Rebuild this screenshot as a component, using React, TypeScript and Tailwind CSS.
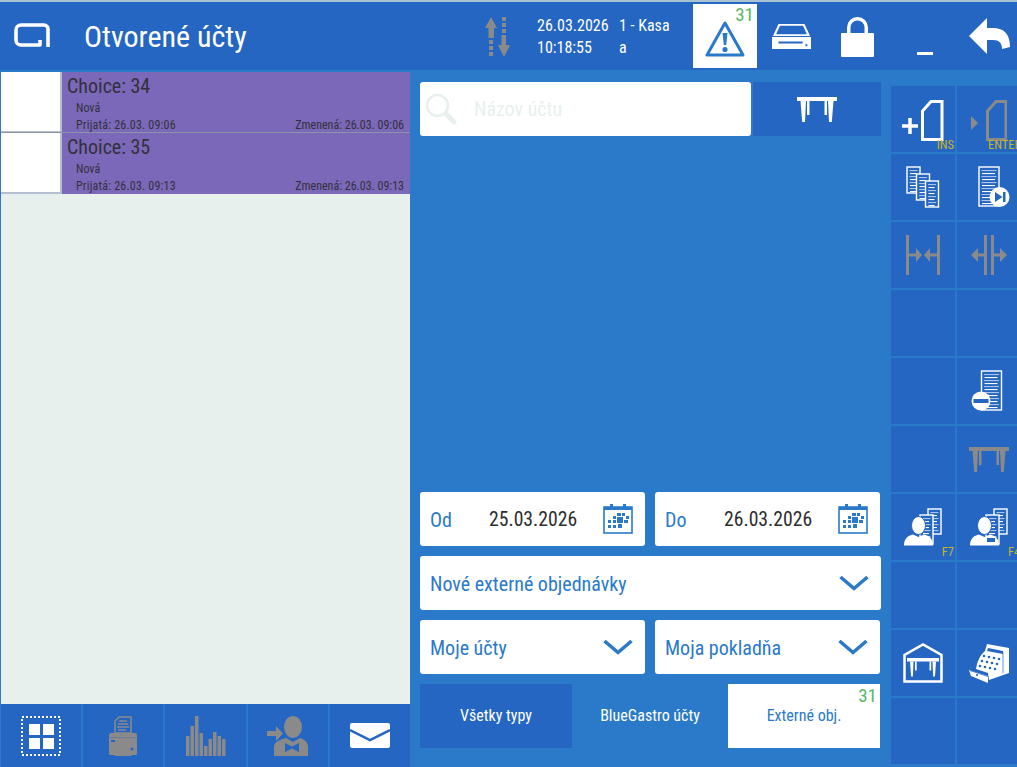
type SheetProps = { x: number; y: number; w: number; h: number };

const GRAY = "#8a8a8a";
const BLUE = "#2a7ac9";
const DARK = "#2566c2";

function Logo() {
  return (
    <svg width="36" height="26" viewBox="0 0 36 26" fill="none" stroke="#fff" strokeWidth="3.6">
      <path d="M34 24V6a4 4 0 0 0-4-4H7a5 5 0 0 0-5 5v10a5 5 0 0 0 5 5h19v-5" strokeLinejoin="round" />
    </svg>
  );
}

function SortIcon() {
  return (
    <svg width="25" height="40" viewBox="0 0 25 40" fill={GRAY} className="mt-[2px]">
      <path d="M0 11 6 0l6 11H9v10H3.500V11Z" />
      <path d="M4 23h4v4H4zM4 29h4v4H4zM4 35h4v4H4z" />
      <path d="M17 0h4v4h-4zM17 6h4v4h-4zM17 12h4v4h-4z" />
      <path d="M16.500 18H21v10h4l-6 12-6-12h3.500Z" />
    </svg>
  );
}

function AlertIcon() {
  return (
    <svg width="40" height="38" viewBox="0 0 40 38" fill="none">
      <path d="M20 3 2 35h36Z" stroke={BLUE} strokeWidth="3" strokeLinejoin="round" />
      <path d="M17.500 13h5l-1.300 12h-2.400Z" fill={BLUE} />
      <circle cx="20" cy="29.500" r="2.600" fill={BLUE} />
    </svg>
  );
}

function DrawerIcon() {
  return (
    <svg width="41" height="26" viewBox="0 0 42 28" fill="#fff">
      <path d="M7 1h28l6 13H1Zm1.600 2L4.400 12h33.200L33.400 3Z" fillRule="evenodd" />
      <path d="M0 15h42v13H0Zm7 5v2h26v-2Zm29 3v2h2v-2Z" fillRule="evenodd" />
    </svg>
  );
}

function LockIcon() {
  return (
    <svg width="33" height="40" viewBox="0 0 33 40" fill="#fff" className="-ml-px mt-[2px]">
      <path d="M6 17V10.500a10.500 10.500 0 0 1 21 0V17h-3.500v-6.500a7 7 0 0 0-14 0V17Z" />
      <rect x="0" y="16" width="33" height="24" rx="1" />
    </svg>
  );
}

function BackIcon() {
  return (
    <svg width="42" height="36" viewBox="0 0 42 36" fill="#fff">
      <path d="M0 18 18 0v10h6c11 0 17 6 17 19l-8 2c0-6-3-9-9-9h-6v14Z" />
    </svg>
  );
}

function SearchIcon() {
  return (
    <svg width="32" height="32" viewBox="0 0 32 32" fill="none" stroke="#e8f0ed">
      <circle cx="12.500" cy="12.500" r="10.500" strokeWidth="2.500" />
      <path d="M20 20l2 2" strokeWidth="2.500" />
      <path d="M22 22l7 7" strokeWidth="5" strokeLinecap="round" />
    </svg>
  );
}

function TableIcon({ color = "#fff" }: { color?: string }) {
  return (
    <svg width="40" height="25" viewBox="0 0 40 25" fill={color}>
      <rect x="0" y="0" width="40" height="4" />
      <path d="M3.500 4H9l-1 21H5.200Z" />
      <path d="M31 4h5.500l-1.700 21H32Z" />
      <rect x="10" y="4" width="2.500" height="14" />
      <rect x="27.500" y="4" width="2.500" height="14" />
    </svg>
  );
}

function AddDocIcon() {
  return (
    <svg width="42" height="42" viewBox="0 0 42 42" fill="none" stroke="#fff" className="mt-[3px]">
      <path d="M0 26h16M8 18v16" strokeWidth="3.500" />
      <path d="M20.500 39.500V11L29 1.500h11v38Z" strokeWidth="3" />
    </svg>
  );
}

function OpenDocIcon() {
  return (
    <svg width="36" height="42" viewBox="0 0 36 42" fill="none" className="mt-[3px]">
      <path d="M0 16 7 23 0 30Z" fill={GRAY} />
      <path d="M16.500 39.500V11L25 1.500h10v38Z" stroke={GRAY} strokeWidth="3" />
    </svg>
  );
}

function Sheet({ x, y, w, h }: SheetProps) {
  const lines = [];
  let odd = false;
  for (let ly = y + 3; ly < y + h - 1.500; ly += 3) {
    lines.push(
      <rect
        key={ly}
        x={odd ? x + 3 : x + 2.500}
        y={ly}
        width={odd ? w - 7 : w - 5}
        height="1.100"
        fill={odd ? "#ffffff" : "#a9c5ec"}
      />
    );
    odd = !odd;
  }
  return (
    <g>
      <rect x={x} y={y} width={w} height={h} fill={DARK} stroke="#fff" strokeWidth="1.400" />
      {lines}
    </g>
  );
}

function CopiesIcon() {
  return (
    <svg width="34" height="42" viewBox="0 0 34 42">
      <Sheet x={1} y={1} w={13} h={26} />
      <Sheet x={10.500} y={8} w={13} h={26} />
      <Sheet x={19.500} y={15} w={13} h={26} />
    </svg>
  );
}

function ReceiptPlayIcon() {
  return (
    <svg width="32" height="42" viewBox="0 0 32 42" className="ml-[9px]">
      <Sheet x={1} y={1} w={20} h={39} />
      <circle cx="21.500" cy="31" r="10" fill="#fff" />
      <path d="M17 26l7.500 5-7.500 5Z" fill={DARK} />
      <rect x="25" y="26" width="2.500" height="10" fill={DARK} />
    </svg>
  );
}

function ReceiptMinusIcon() {
  return (
    <svg width="32" height="42" viewBox="0 0 32 42" className="mr-[4px]">
      <Sheet x={10.500} y={1} w={20} h={39} />
      <circle cx="10" cy="31" r="9.500" fill="#fff" />
      <rect x="2.500" y="29" width="15" height="4" fill={DARK} />
    </svg>
  );
}

function MergeIcon() {
  return (
    <svg width="34" height="40" viewBox="0 0 34 40" fill={GRAY}>
      <rect x="0" y="0" width="3" height="40" />
      <rect x="31" y="0" width="3" height="40" />
      <path d="M3 18.500h7V13l6 7-6 7v-5.500H3Z" />
      <path d="M31 18.500h-7V13l-6 7 6 7v-5.500h7Z" />
    </svg>
  );
}

function SplitIcon() {
  return (
    <svg width="36" height="40" viewBox="0 0 36 40" fill={GRAY}>
      <rect x="13" y="0" width="3" height="40" />
      <rect x="20" y="0" width="3" height="40" />
      <path d="M13 18.500H7V13l-7 7 7 7v-5.500h6Z" />
      <path d="M23 18.500h6V13l7 7-7 7v-5.500h-6Z" />
    </svg>
  );
}

function UserDocsIcon({ badge }: { badge?: boolean }) {
  return (
    <svg width="38" height="38" viewBox="0 0 38 38">
      <Sheet x={24} y={1} w={13} h={25} />
      <Sheet x={16} y={7} w={13} h={29} />
      <ellipse cx="14.500" cy="17.500" rx="7" ry="9" fill="#fff" stroke={DARK} strokeWidth="1" />
      <path d="M0 37.500c0-7 4-10 9-11l5.500 2.500 5.500-2.500c5 1 9 4 9 11Z" fill="#fff" />
      {badge && <rect x="17" y="30" width="8" height="4" fill={DARK} />}
    </svg>
  );
}

function WarehouseIcon() {
  return (
    <svg width="40" height="40" viewBox="0 0 40 40" fill="none">
      <path d="M1.500 38.500V12L20 1.500 38.500 12v26.500Z" stroke="#fff" strokeWidth="2.500" />
      <rect x="4" y="15" width="32" height="3.500" fill="#fff" />
      <path d="M7 18.500h3.500l-.6 15H8.100ZM29.500 18.500H33l-1 15h-1.800Z" fill="#fff" />
      <rect x="12" y="18.500" width="1.700" height="9" fill="#fff" />
      <rect x="26.500" y="18.500" width="1.700" height="9" fill="#fff" />
    </svg>
  );
}

function CashRegisterIcon() {
  const keys = [
    [15, 12], [20, 13], [25, 14], [30, 15],
    [13, 17], [18, 18], [23, 19], [28, 20],
    [11, 22], [16, 23], [21, 24], [26, 25],
  ];
  return (
    <svg width="41" height="39" viewBox="0 0 41 39">
      <path d="M18 0l22 4v25l-20 7-1-7L7 25c1-7 4-14 9-18Z" fill="#fff" />
      <path d="M19 4l15 3v3L18 7Z" fill={DARK} />
      <g fill={DARK}>
        {keys.map(([cx, cy]) => (
          <circle key={`${cx}-${cy}`} cx={cx} cy={cy} r="1.300" />
        ))}
      </g>
      <path d="M34 8v21" stroke={DARK} strokeWidth="0.700" />
      <path d="M0 26l19 6v7L2 32Z" fill="#fff" />
      <path d="M1 26.500l18 6" stroke={DARK} strokeWidth="0.800" />
      <circle cx="8" cy="31" r="1.100" fill={DARK} />
    </svg>
  );
}

function GridIcon() {
  return (
    <svg width="40" height="40" viewBox="0 0 40 40">
      <rect x="1" y="1" width="38" height="38" fill="none" stroke="#fff" strokeWidth="2" strokeDasharray="2 2" />
      <rect x="8" y="8" width="11" height="11" fill="#fff" />
      <rect x="22" y="8" width="11" height="11" fill="#fff" />
      <rect x="8" y="22" width="11" height="11" fill="#fff" />
      <rect x="22" y="22" width="11" height="11" fill="#fff" />
    </svg>
  );
}

function PrinterIcon() {
  return (
    <svg width="28" height="40" viewBox="0 0 28 40" fill={GRAY}>
      <path d="M6 17V5l4-4h12v16Z" stroke={GRAY} strokeWidth="1.500" fill={DARK} />
      <path d="M10 5h8M9 8h10M8 11h12M9 14h8" stroke={GRAY} strokeWidth="1.300" />
      <path d="M2 17h24a2 2 0 0 1 2 2v17a2 2 0 0 1-2 3h-3l-1 1H6l-1-1H2a2 2 0 0 1-2-3V19a2 2 0 0 1 2-2Z" />
      <rect x="2" y="24" width="4" height="2" fill={DARK} />
      <circle cx="23" cy="33" r="1.500" fill={DARK} />
      <rect x="0" y="21" width="28" height="1" fill={DARK} opacity="0.300" />
    </svg>
  );
}

function BarsIcon() {
  const bars = [20, 30, 40, 23, 10, 17, 24, 20, 17];
  return (
    <svg width="40" height="40" viewBox="0 0 40 40" fill={GRAY}>
      {bars.map((h, i) => (
        <rect key={i} x={i * 4.500} y={40 - h} width="3.500" height={h} />
      ))}
    </svg>
  );
}

function WaiterIcon() {
  return (
    <svg width="41" height="40" viewBox="0 0 41 40" fill={GRAY}>
      <path d="M0 15h9v-5l7 7.500L9 25v-5H0Z" />
      <ellipse cx="26" cy="11" rx="9" ry="11" />
      <path d="M7 40v-9c0-5 5-7 12-9l7 4 7-4c3 1 8 3 8 9v9Z" />
      <path d="M18 27l7 3.500 7-3.500v9l-7-3.500-7 3.500Z" fill={DARK} />
    </svg>
  );
}

function MailIcon() {
  return (
    <svg width="40" height="25" viewBox="0 0 40 25">
      <rect x="0" y="0" width="40" height="25" rx="2" fill="#fff" />
      <path d="M0 7l20 10L40 7" fill="none" stroke={DARK} strokeWidth="2.500" />
    </svg>
  );
}

function CalendarIcon() {
  return (
    <svg width="30" height="30" viewBox="0 0 30 30">
      <rect x="1" y="3" width="28" height="26" fill="none" stroke={BLUE} strokeWidth="1.600" />
      <rect x="1" y="3" width="28" height="3" fill={BLUE} />
      <rect x="7" y="0" width="3" height="5" fill={BLUE} />
      <rect x="20" y="0" width="3" height="5" fill={BLUE} />
      <g fill={BLUE}>
        <rect x="10" y="12" width="3" height="3" />
        <rect x="19" y="9" width="3" height="3" />
        <rect x="14" y="9" width="4" height="3" />
        <rect x="23" y="12" width="3" height="3" />
        <rect x="5" y="16" width="3" height="3" />
        <rect x="10" y="16" width="3" height="3" />
        <rect x="14" y="13" width="6" height="6" />
        <rect x="21" y="16" width="4" height="3" />
        <rect x="5" y="21" width="3" height="3" />
        <rect x="10" y="21" width="3" height="3" />
        <rect x="15" y="20" width="4" height="4" />
      </g>
    </svg>
  );
}

function Chevron() {
  return (
    <svg width="30" height="16" viewBox="0 0 30 16" fill="none" stroke={BLUE} strokeWidth="3.600">
      <path d="M1.500 2 15 13.500 28.500 2" />
    </svg>
  );
}

function OrderRow({ id, taken, changed, last }: { id: number; taken: string; changed: string; last?: boolean }) {
  return (
    <div className={`flex h-[61px] ${last ? "" : "border-b border-[#8a93a8]"}`}>
      <div className={`w-[61px] shrink-0 bg-white border-r-2 border-[#b4c0cf] ${last ? "border-b-2" : "border-b"}`} />
      <div className="flex-1 bg-[#7b68b8] text-[#33303e] pl-[5px] pr-[6px] leading-none">
        <div className="text-[20px] h-[30px] pt-[4px]">Choice: {id}</div>
        <div className="text-[12px] pl-[9px] h-[16px]">Nová</div>
        <div className="text-[12px] pl-[9px] pt-px flex justify-between">
          <span className="tracking-[0.2px]">Prijatá: 26.03. {taken}</span>
          <span>Zmenená: 26.03. {changed}</span>
        </div>
      </div>
    </div>
  );
}

function SideCell({ children, hint, hintClass }: { children?: React.ReactNode; hint?: string; hintClass?: string }) {
  return (
    <div className="relative w-[64px] h-[66px] bg-[#2566c2] flex items-center justify-center shrink-0">
      {children}
      {hint && <span className={`absolute text-[12.500px] leading-none text-[#c9b32a] ${hintClass}`}>{hint}</span>}
    </div>
  );
}

function DateField({ label, value }: { label: string; value: string }) {
  return (
    <div className="flex-1 h-[54px] bg-white rounded-[3px] flex items-center pl-[10px] pr-[12px]">
      <span className="text-[#2a7ac9] text-[20px] font-[450] w-[59px] pt-[2px]">{label}</span>
      <span className="flex-1 text-[#2d2d2d] text-[19.700px] font-[450] pt-px">{value}</span>
      <CalendarIcon />
    </div>
  );
}

function SelectField({ label, className }: { label: string; className?: string }) {
  return (
    <div className={`h-[54px] bg-white rounded-[3px] flex items-center justify-between pl-[10px] pr-[12px] text-[#2a7ac9] text-[20px] font-[450] ${className}`}>
      <span className="pt-px">{label}</span>
      <Chevron />
    </div>
  );
}

export default function App() {
  return (
    <div
      className="w-[1017px] h-[767px] overflow-hidden flex flex-col bg-[#2a7ac9] font-stretch-condensed"
      style={{ fontFamily: "Roboto, 'Liberation Sans', sans-serif" }}
    >
      <div className="h-[2px] bg-[#a9c3d4] shrink-0" />
      <header className="h-[68px] bg-[#2566c2] flex items-center shrink-0 text-white">
        <div className="ml-[14px] w-[70px]">
          <Logo />
        </div>
        <h1 className="text-[30px] font-normal w-[401px]">Otvorené účty</h1>
        <div className="w-[52px]">
          <SortIcon />
        </div>
        <div className="w-[156px] grid grid-cols-[72px_1fr] gap-y-[3px] text-[16px] leading-[19px]">
          <span>26.03.2026</span>
          <span className="pl-[10px]">1 - Kasa</span>
          <span>10:18:55</span>
          <span className="pl-[10px]">a</span>
        </div>
        <div className="relative w-[64px] h-[64px] bg-white flex items-end justify-center pb-[10px]">
          <AlertIcon />
          <span className="absolute top-0 right-[3px] text-[#57b96a] text-[19px] leading-[22px]">31</span>
        </div>
        <div className="ml-[14px] w-[71px]">
          <DrawerIcon />
        </div>
        <div className="w-[75px]">
          <LockIcon />
        </div>
        <div className="w-[52px] h-[42px] flex items-end">
          <div className="w-[16px] h-[3px] bg-white mb-[2px]" />
        </div>
        <BackIcon />
      </header>

      <main className="flex-1 flex min-h-0">
        <section className="w-[410px] shrink-0 flex flex-col border-l border-[#2a7ac9] pt-[2px]">
          <div className="flex-1 bg-[#e8f0ed]">
            <OrderRow id={34} taken="09:06" changed="09:06" />
            <OrderRow id={35} taken="09:13" changed="09:13" last />
          </div>
          <nav className="h-[63px] flex gap-[2px] shrink-0">
            <div className="flex-1 bg-[#2566c2] flex items-center justify-center"><GridIcon /></div>
            <div className="flex-1 bg-[#2566c2] flex items-center justify-center"><PrinterIcon /></div>
            <div className="flex-1 bg-[#2566c2] flex items-center justify-center"><BarsIcon /></div>
            <div className="flex-1 bg-[#2566c2] flex items-center justify-center"><WaiterIcon /></div>
            <div className="flex-1 bg-[#2566c2] flex items-center justify-center"><MailIcon /></div>
          </nav>
        </section>

        <section className="w-[461px] ml-[10px] shrink-0 flex flex-col pt-[12px]">
          <div className="flex h-[54px] gap-[2px]">
            <div className="flex-1 bg-white rounded-[3px] flex items-center pl-[5px]">
              <SearchIcon />
              <span className="ml-[17px] text-[20px] text-[#e8f0ed]">Názov účtu</span>
            </div>
            <div className="w-[128px] bg-[#2566c2] flex items-center justify-center">
              <TableIcon />
            </div>
          </div>
          <div className="flex-1" />
          <div className="flex flex-col gap-[10px] pb-[19px]">
            <div className="flex gap-[10px] pr-px">
              <DateField label="Od" value="25.03.2026" />
              <DateField label="Do" value="26.03.2026" />
            </div>
            <SelectField label="Nové externé objednávky" />
            <div className="flex gap-[10px] pr-px">
              <SelectField label="Moje účty" className="flex-1" />
              <SelectField label="Moja pokladňa" className="flex-1" />
            </div>
            <div className="flex h-[64px] pr-px text-[16px]">
              <div className="w-[152px] bg-[#2566c2] text-white flex items-center justify-center">Všetky typy</div>
              <div className="w-[156px] text-white flex items-center justify-center">BlueGastro účty</div>
              <div className="relative flex-1 bg-white text-[#2a7ac9] flex items-center justify-center">
                Externé obj.
                <span className="absolute top-px right-[3px] text-[#57b96a] text-[19px] leading-[22px]">31</span>
              </div>
            </div>
          </div>
        </section>

        <aside className="ml-[10px] w-[135px] shrink-0 grid grid-cols-[64px_64px] gap-[2px] content-start pt-[16px]">
          <SideCell hint="INS" hintClass="right-px bottom-px"><AddDocIcon /></SideCell>
          <SideCell hint="ENTER" hintClass="left-[31px] bottom-px"><OpenDocIcon /></SideCell>
          <SideCell><CopiesIcon /></SideCell>
          <SideCell><ReceiptPlayIcon /></SideCell>
          <SideCell><MergeIcon /></SideCell>
          <SideCell><SplitIcon /></SideCell>
          <SideCell />
          <SideCell />
          <SideCell />
          <SideCell><ReceiptMinusIcon /></SideCell>
          <SideCell />
          <SideCell><TableIcon color={GRAY} /></SideCell>
          <SideCell hint="F7" hintClass="right-px bottom-[2px]"><UserDocsIcon /></SideCell>
          <SideCell hint="F4" hintClass="left-[51px] bottom-[2px]"><UserDocsIcon badge /></SideCell>
          <SideCell />
          <SideCell />
          <SideCell><WarehouseIcon /></SideCell>
          <SideCell><CashRegisterIcon /></SideCell>
          <SideCell />
          <SideCell />
        </aside>
      </main>
    </div>
  );
}
